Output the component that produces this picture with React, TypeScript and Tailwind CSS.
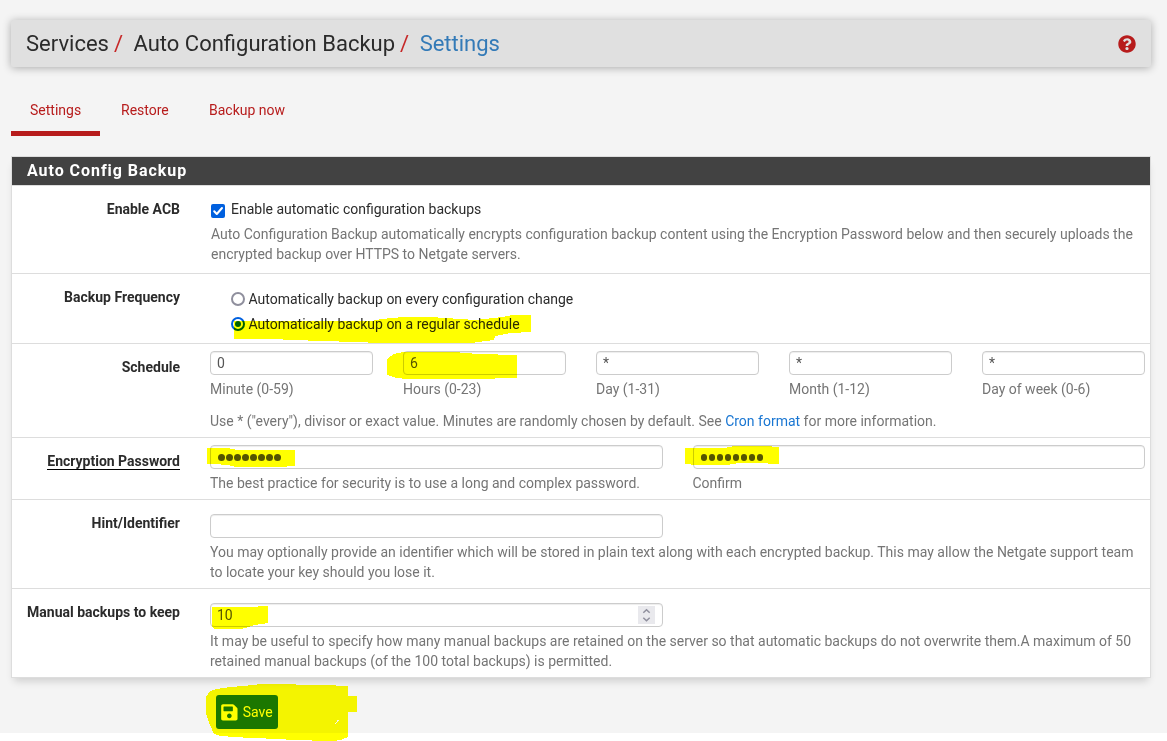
import type { ReactNode } from "react";
import { FaQuestionCircle, FaSave } from "react-icons/fa";

const inputBox =
  "flex h-[24px] items-start rounded-[4px] border border-[#ccc] bg-white pl-[6px] text-[14px] leading-[22px] text-[#555] shadow-[inset_0_1px_1px_rgba(0,0,0,0.075)]";

function Row({ label, height, underline, children }: { label: string; height: string; underline?: boolean; children: ReactNode }) {
  return (
    <div className={`flex border-b border-[#dddddd] ${height}`}>
      <div className="w-[168px] shrink-0 pt-[13px] text-right font-bold leading-[20px] text-[#2b2b2b]">
        <span className={underline ? "inline-block border-b border-black leading-[16px]" : ""}>{label}</span>
      </div>
      <div className="ml-[30px] flex-1 text-[#757575]">{children}</div>
    </div>
  );
}

function Lines({ lines, className }: { lines: string[]; className: string }) {
  return (
    <div className={className}>
      {lines.map((l) => (
        <p key={l} className="h-5 leading-5">{l}</p>
      ))}
    </div>
  );
}

function Dots() {
  return (
    <span className="ml-[1px] mt-[8px] flex gap-[1.5px]">
      {[0, 1, 2, 3, 4, 5, 6, 7].map((i) => (
        <i key={i} className="size-[6.5px] rounded-full bg-[#555]" />
      ))}
    </span>
  );
}

const schedule = [
  ["0", "Minute (0-59)"],
  ["6", "Hours (0-23)"],
  ["*", "Day (1-31)"],
  ["*", "Month (1-12)"],
  ["*", "Day of week (0-6)"],
];

function Highlights() {
  return (
    <svg className="pointer-events-none absolute left-0 top-0 mix-blend-multiply" width="1167" height="741" viewBox="0 0 1167 741" fill="#ffff00" shapeRendering="crispEdges">
      <path d="M234 321H371L382 319L403 317H430L475 320L502 317L513 315H531V332L511 333L495 336L494 340L471 343H382L324 341L292 340L273 339H234Z" />
      <path d="M387 359L394 354L403 352H454L478 354L517 355V378L474 379H408L396 378L387 375Z" />
      <path d="M207 448H227L237 450H295V466H287V467H234V466L217 464H207Z" />
      <path d="M685 448H725L734 446H772V447H779V464H768V463H739L727 465H691V464H685Z" />
      <path d="M212 607H258V606H268V623L255 625L245 628L240 629H214L212 627Z" />
      <path d="M206 697L210 691L216 689L231 687L253 685L262 684H296V685H336V686H348V696H357V712H348V737L341 740L333 741L290 740L281 739L251 738L220 736L214 734L210 725L206 713Z M337 721V720H339V721L336 723V724H335V723Z" fillRule="evenodd" />
    </svg>
  );
}

export default function App() {
  return (
    <div className="relative h-[741px] w-[1167px] overflow-hidden whitespace-nowrap bg-white font-['Roboto',sans-serif] text-[14px] leading-5 text-[#2b2b2b]">
      <div className="h-[733px] bg-[#f4f4f4] pl-[11px] pt-[20px]">
        <header className="flex h-[47px] w-[1140px] items-center justify-between rounded-[2px] bg-[#e0e0e0] pl-[15px] pr-[15px] shadow-[0_1px_8px_rgba(0,0,0,0.3)]">
          <h1 className="flex text-[22px] leading-6">
            <span>Services</span>
            <span className="ml-[5px] text-[#c62828]">/</span>
            <span className="ml-[10.5px]">Auto Configuration Backup</span>
            <span className="ml-[5px] text-[#c62828]">/</span>
            <span className="ml-[10.5px] text-[#337ab7]">Settings</span>
          </h1>
          <FaQuestionCircle size={18} color="#b71c1c" />
        </header>
        <nav className="mt-[24px] flex h-[45px] text-[#b71c1c]">
          <a className="w-[89px] border-b-[5px] border-[#b71c1c] pl-[19px] pt-[9px]">Settings</a>
          <a className="w-[88px] pl-[21px] pt-[9px]">Restore</a>
          <a className="pl-[21px] pt-[9px]">Backup now</a>
        </nav>
        <main className="mt-[20px] w-[1140px] border-x border-t border-[#dddddd] bg-white shadow-[0_6px_8px_-3px_rgba(0,0,0,0.16)]">
          <h2 className="h-[29px] border-b border-[#dddddd] bg-[#424242] pl-[15px] text-[16px] font-bold leading-[28px] tracking-[0.95px] text-white">Auto Config Backup</h2>
          <Row label="Enable ACB" height="h-[88px]">
            <div className="flex items-center pl-[1px] pt-[13px] text-[#2b2b2b]">
              <svg className="mr-[6px] mt-[3px]" width="14" height="14" viewBox="0 0 14 14">
                <rect width="14" height="14" rx="2" fill="#0060df" />
                <path d="M3.2 7.2L5.8 10L11 4" fill="none" stroke="#fff" strokeWidth="2" strokeLinecap="round" strokeLinejoin="round" />
              </svg>
              Enable automatic configuration backups
            </div>
            <Lines
              className="pl-[1px] pt-[5px]"
              lines={[
                "Auto Configuration Backup automatically encrypts configuration backup content using the Encryption Password below and then securely uploads the",
                "encrypted backup over HTTPS to Netgate servers.",
              ]}
            />
          </Row>
          <Row label="Backup Frequency" height="h-[70px]">
            <div className="flex flex-col gap-[5px] pl-[21px] pt-[15px] text-[#2b2b2b]">
              <div className="flex h-5 items-center">
                <i className="mr-[3.5px] size-[14px] rounded-full border-2 border-[#8f8f9d]" />
                Automatically backup on every configuration change
              </div>
              <div className="flex h-5 items-center">
                <i className="mr-[3.5px] flex size-[14px] items-center justify-center rounded-full border-2 border-[#0060df]">
                  <i className="size-[6px] rounded-full bg-[#0060df]" />
                </i>
                Automatically backup on a regular schedule
              </div>
            </div>
          </Row>
          <Row label="Schedule" height="h-[94px]">
            <div className="flex gap-[30px] pt-[7px]">
              {schedule.map(([v, l]) => (
                <div key={l} className="w-[163px]">
                  <div className={inputBox}>{v}</div>
                  <p className="mt-[4px]">{l}</p>
                </div>
              ))}
            </div>
            <p className="mt-[12px]">
              Use * ("every"), divisor or exact value. Minutes are randomly chosen by default. See <a className="text-[#1976d2]">Cron format</a> for more information.
            </p>
          </Row>
          <Row label="Encryption Password" height="h-[62px]" underline>
            <div className="flex gap-[30px] pt-[7px]">
              {["The best practice for security is to use a long and complex password.", "Confirm"].map((l) => (
                <div key={l} className="w-[452.5px]">
                  <div className={inputBox}>
                    <Dots />
                  </div>
                  <p className="mt-[4px]">{l}</p>
                </div>
              ))}
            </div>
          </Row>
          <Row label="Hint/Identifier" height="h-[89px]">
            <div className="pt-[14px]">
              <div className={`${inputBox} w-[453px]`} />
              <Lines
                className="pt-[4px]"
                lines={[
                  "You may optionally provide an identifier which will be stored in plain text along with each encrypted backup. This may allow the Netgate support team",
                  "to locate your key should you lose it.",
                ]}
              />
            </div>
          </Row>
          <Row label="Manual backups to keep" height="h-[89px]">
            <div className="pt-[14px]">
              <div className={`${inputBox} w-[453px] justify-between pr-[7px]`}>
                10
                <svg className="mt-[2px]" width="17" height="18" viewBox="0 0 17 18">
                  <rect width="17" height="18" fill="#e9e9ed" />
                  <path d="M5.3 6.8L8.5 3.8L11.7 6.8M5.3 11.7L8.5 14.7L11.7 11.7" fill="none" stroke="#8f8f9d" strokeWidth="1.5" />
                </svg>
              </div>
              <Lines
                className="pt-[4px]"
                lines={[
                  "It may be useful to specify how many manual backups are retained on the server so that automatic backups do not overwrite them.A maximum of 50",
                  "retained manual backups (of the 100 total backups) is permitted.",
                ]}
              />
            </div>
          </Row>
        </main>
        <button className="ml-[205px] mt-[17px] flex h-[34px] w-[62px] items-center rounded-[3px] bg-[#1b7705] pl-[4px] text-white">
          <FaSave size={18.7} className="mr-[4px] mt-[1px]" />
          Save
        </button>
      </div>
      <Highlights />
    </div>
  );
}
